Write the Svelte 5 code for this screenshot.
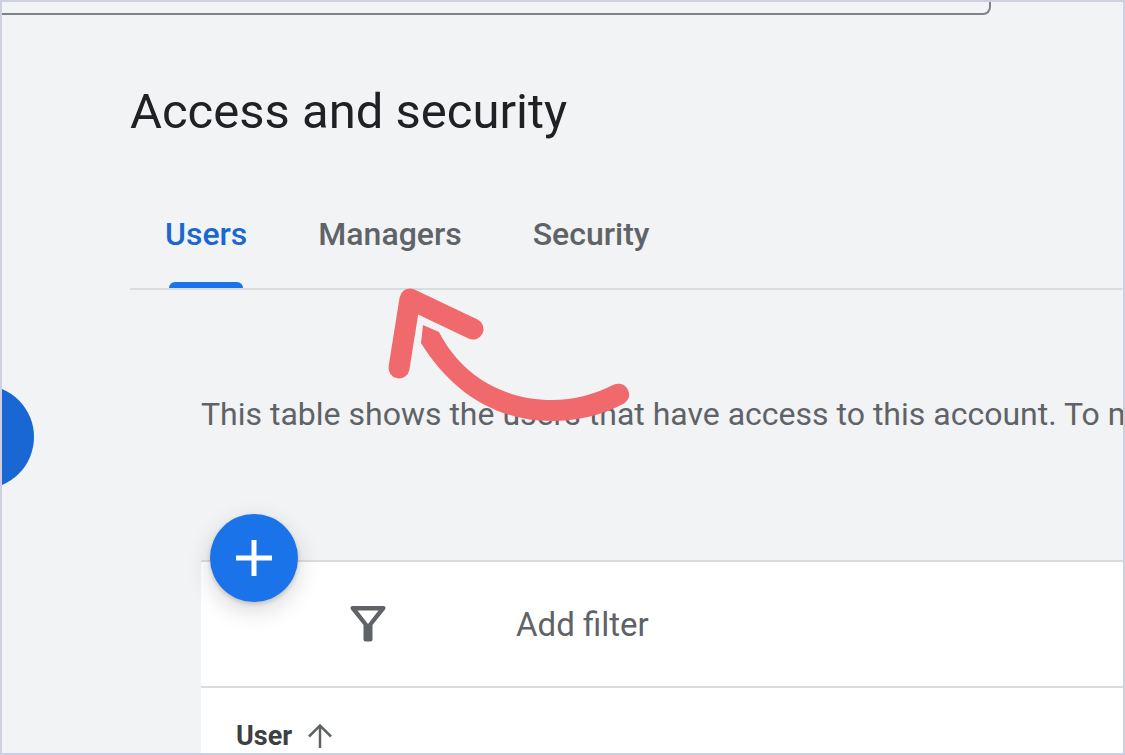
<script lang="ts">
    const tabs = ['Users', 'Managers', 'Security']
    let active = $state('Users')
    let ascending = $state(true)
</script>

<div class="frame">
    <header>
        <input type="search" aria-label="Search" />
    </header>

    <button class="drawer-toggle" aria-label="Open navigation"></button>

    <main>
        <h1>Access and security</h1>

        <div class="tabs" role="tablist">
            {#each tabs as tab}
                <button
                    role="tab"
                    class:active={tab === active}
                    aria-selected={tab === active}
                    onclick={() => (active = tab)}
                >
                    {tab}
                </button>
            {/each}
        </div>

        <section>
            <p>This table shows the users that have access to this account. To m</p>

            <div class="card">
                <button class="add" aria-label="Add user">
                    <svg viewBox="0 0 36 36" width="36" height="36">
                        <path d="M18 0V36M0 18H36" stroke="#fff" stroke-width="5" />
                    </svg>
                </button>

                <div class="toolbar">
                    <svg viewBox="0 0 36 36" width="36" height="36">
                        <path
                            d="M2.5 0H33.5Q36.5 0.5 35 3.5L22.5 19V33.5Q22.5 35.5 20.5 35.5H15.5Q13.5 35.5 13.5 33.5V19L1 3.5Q-0.5 0.5 2.5 0ZM7.5 4.5L18 18L28.5 4.5Z"
                            fill="#5f6368"
                            fill-rule="evenodd"
                        />
                    </svg>
                    <button>Add filter</button>
                </div>

                <table>
                    <thead>
                        <tr>
                            <th aria-sort={ascending ? 'ascending' : 'descending'}>
                                <button onclick={() => (ascending = !ascending)}>
                                    User
                                    <svg class:flip={!ascending} viewBox="0 0 24 24" width="24" height="24">
                                        <path
                                            d="M12 24V2M1 12.5L12 1.5L23 12.5"
                                            fill="none"
                                            stroke="#5f6368"
                                            stroke-width="2.5"
                                        />
                                    </svg>
                                </button>
                            </th>
                        </tr>
                    </thead>
                </table>
            </div>
        </section>

        <svg class="pointer" viewBox="0 0 244 136" width="244" height="136" aria-hidden="true">
            <path
                d="M13 82L24 13L87 43"
                fill="none"
                stroke="#f0696c"
                stroke-width="21"
                stroke-linecap="round"
                stroke-linejoin="round"
            />
            <path
                d="M37 39L53 46C75 89 117 114 166 114C188 114 209 108 227 99C234 96 240 99 242 104C245 110 242 115 237 118C214 130 190 135 166 135C111 135 66 107 35 57Z"
                fill="#f0696c"
            />
        </svg>
    </main>
</div>

<style>
    :global(body) {
        margin: 0;
    }
    .frame {
        position: relative;
        box-sizing: border-box;
        height: 100vh;
        overflow: hidden;
        border: 2px solid #cfcfe2;
        background: #f1f3f4;
        color: #5f6368;
        font-family: Roboto, 'Liberation Sans', sans-serif;
    }
    button {
        padding: 0;
        border: 0;
        background: none;
        color: inherit;
        font: inherit;
        cursor: pointer;
    }
    svg {
        display: block;
        flex: none;
    }
    header {
        display: flex;
        padding-right: 132px;
    }
    input {
        box-sizing: border-box;
        width: 100%;
        height: 13px;
        padding: 0 16px;
        border: 2px solid #808386;
        border-width: 0 2px 2px 0;
        border-radius: 0 0 8px 0;
        background: transparent;
        outline: none;
    }
    .drawer-toggle {
        position: absolute;
        top: 383px;
        left: -72px;
        width: 104px;
        height: 104px;
        border-radius: 50%;
        background: #1967d2;
    }
    main {
        position: relative;
        padding: 65px 0 0 128px;
    }
    h1 {
        margin: 0;
        color: #202124;
        font-size: 49px;
        font-weight: 400;
        line-height: 64px;
    }
    .tabs {
        display: flex;
        gap: 71px;
        margin-top: 43px;
        padding-left: 35px;
        border-bottom: 2px solid #dadce0;
    }
    .tabs button {
        position: relative;
        height: 101px;
        padding-bottom: 8px;
        font-size: 32px;
        font-weight: 500;
    }
    .tabs .active {
        color: #1967d2;
    }
    .tabs .active::after {
        content: '';
        position: absolute;
        right: 4px;
        bottom: 0;
        left: 4px;
        height: 6px;
        border-radius: 6px 6px 0 0;
        background: #1a73e8;
    }
    section {
        padding: 104px 0 0 71px;
    }
    p {
        margin: 0;
        font-size: 32px;
        line-height: 40px;
        white-space: nowrap;
    }
    .card {
        position: relative;
        margin-top: 126px;
        border-top: 2px solid #dadce0;
        background: #fff;
    }
    .add {
        position: absolute;
        top: -48px;
        left: 9px;
        display: flex;
        align-items: center;
        justify-content: center;
        width: 88px;
        height: 88px;
        border-radius: 50%;
        background: #1a73e8;
        box-shadow: 0 2px 4px rgba(0, 0, 0, 0.16), 0 8px 24px rgba(0, 0, 0, 0.16);
    }
    .toolbar {
        display: flex;
        align-items: center;
        gap: 130px;
        height: 124px;
        padding-left: 149px;
        border-bottom: 2px solid #dadce0;
        font-size: 33px;
    }
    table {
        width: 100%;
        border-collapse: collapse;
    }
    th {
        height: 96px;
        padding: 0 35px;
        color: #3c4043;
        text-align: left;
    }
    th button {
        display: flex;
        align-items: center;
        gap: 16px;
        font-size: 27px;
        font-weight: 700;
    }
    .flip {
        transform: rotate(180deg);
    }
    .pointer {
        position: absolute;
        top: 271px;
        left: 384px;
        pointer-events: none;
    }
</style>
